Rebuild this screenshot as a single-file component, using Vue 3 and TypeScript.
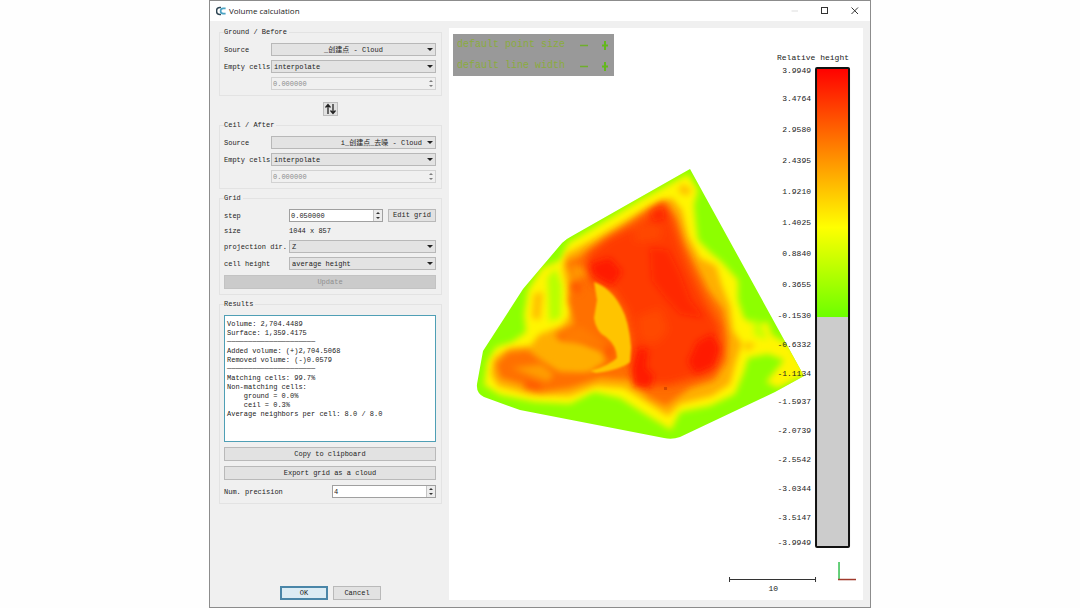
<script setup lang="ts">
import { reactive, ref } from 'vue'

interface CloudGroup {
  id: string
  title: string
  source: string
  align: string
  empty: string
  value: string
}

const before = reactive<CloudGroup>({
  id: 'before', title: 'Ground / Before', source: '_创建点 - Cloud', align: 'center', empty: 'interpolate', value: '0.000000',
})
const after = reactive<CloudGroup>({
  id: 'after', title: 'Ceil / After', source: 'i_创建点_去噪 - Cloud', align: 'right', empty: 'interpolate', value: '0.000000',
})
const groups = [before, after]

function swapClouds() {
  const source = before.source
  before.source = after.source
  after.source = source
}

const step = ref('0.050000')
const precision = ref('4')
const rule = '─────────────────────'
const report = ref(`Volume: 2,704.4489
Surface: 1,359.4175
${rule}
Added volume: (+)2,704.5068
Removed volume: (-)0.0579
${rule}
Matching cells: 99.7%
Non-matching cells:
    ground = 0.0%
    ceil = 0.3%
Average neighbors per cell: 8.0 / 8.0`)

const ticks = [
  { y: 70, label: '3.9949' }, { y: 98, label: '3.4764' }, { y: 129, label: '2.9580' },
  { y: 160, label: '2.4395' }, { y: 191, label: '1.9210' }, { y: 222, label: '1.4025' },
  { y: 253, label: '0.8840' }, { y: 284, label: '0.3655' }, { y: 315, label: '-0.1530' },
  { y: 344, label: '-0.6332' }, { y: 373, label: '-1.1134' }, { y: 401, label: '-1.5937' },
  { y: 430, label: '-2.0739' }, { y: 459, label: '-2.5542' }, { y: 488, label: '-3.0344' },
  { y: 517, label: '-3.5147' }, { y: 542, label: '-3.9949' },
]
const displayOptions = ['default point size', 'default line width']
</script>

<template>
  <main class="window">
    <header class="titlebar">
      <svg class="logo" viewBox="0 0 10 10" aria-hidden="true">
        <path d="M5 1.6H3.800A3.200 3.400 0 0 0 3.800 8.400H5" fill="none" stroke="#2f4654" stroke-width="1.500" />
        <path d="M9.600 2.300H7.200Q4.600 2.600 4.600 5T7.200 7.700H9.600" fill="none" stroke="#4ba3c4" stroke-width="1.700" />
      </svg>
      <h1>Volume calculation</h1>
      <div class="controls">
        <button type="button" aria-label="Minimize" disabled>
          <svg viewBox="0 0 10 10"><path d="M1.500 5H8" stroke="#ddd" /></svg>
        </button>
        <button type="button" aria-label="Maximize">
          <svg viewBox="0 0 10 10"><rect x="1.500" y="1.500" width="6" height="6" fill="none" stroke="#333" /></svg>
        </button>
        <button type="button" aria-label="Close">
          <svg viewBox="0 0 10 10"><path d="M1.500 1.500 8 8M8 1.500 1.500 8" stroke="#333" /></svg>
        </button>
      </div>
    </header>

    <div class="body">
      <form class="panel" @submit.prevent>
        <template v-for="g in groups" :key="g.id">
          <fieldset class="group">
            <legend>{{ g.title }}</legend>
            <div class="row">
              <label :for="g.id + '-source'">Source</label>
              <span class="combo">
                <select :id="g.id + '-source'" :class="g.align"><option>{{ g.source }}</option></select>
              </span>
            </div>
            <div class="row">
              <label :for="g.id + '-empty'">Empty cells</label>
              <span class="combo">
                <select :id="g.id + '-empty'" v-model="g.empty"><option>interpolate</option></select>
              </span>
            </div>
            <div class="row">
              <span></span>
              <span class="spin off">
                <input v-model="g.value" type="text" :aria-label="g.title + ' empty cell value'" disabled />
                <i class="arrows"></i>
              </span>
            </div>
          </fieldset>
          <button v-if="g.id === 'before'" class="swap" type="button" aria-label="Swap clouds" @click="swapClouds">
            <svg viewBox="0 0 13 12">
              <path d="M4 11V2M1.500 4.500 4 1.500 6.500 4.500M9 1V10M6.500 7.500 9 10.500 11.500 7.500" fill="none" stroke="#222" stroke-width="1.300" />
            </svg>
          </button>
        </template>

        <fieldset class="group grid">
          <legend>Grid</legend>
          <div class="row">
            <label for="step">step</label>
            <span class="pair">
              <span class="spin"><input id="step" v-model="step" type="text" /><i class="arrows"></i></span>
              <button class="btn edit" type="button">Edit grid</button>
            </span>
          </div>
          <div class="row size"><span>size</span><output>1044 x 857</output></div>
          <div class="row">
            <label for="dir">projection dir.</label>
            <span class="combo"><select id="dir"><option>Z</option></select></span>
          </div>
          <div class="row">
            <label for="height">cell height</label>
            <span class="combo"><select id="height"><option>average height</option></select></span>
          </div>
          <button class="btn" type="button" disabled>Update</button>
        </fieldset>

        <fieldset class="group results">
          <legend>Results</legend>
          <textarea v-model="report" aria-label="Results" readonly spellcheck="false"></textarea>
          <button class="btn" type="button">Copy to clipboard</button>
          <button class="btn" type="button">Export grid as a cloud</button>
          <div class="row precision">
            <label for="precision">Num. precision</label>
            <span class="spin"><input id="precision" v-model="precision" type="text" /><i class="arrows"></i></span>
          </div>
        </fieldset>

        <footer class="actions">
          <button class="btn ok" type="submit">OK</button>
          <button class="btn" type="button">Cancel</button>
        </footer>
      </form>

      <section class="viewer" aria-label="Relative height view">
        <svg class="scene" viewBox="449 28 414 570" preserveAspectRatio="xMidYMin meet">
          <defs>
            <linearGradient id="ramp" x1="0" y1="0" x2="0" y2="1">
              <stop offset="0" stop-color="#ff0000" />
              <stop offset=".64" stop-color="#ffff00" />
              <stop offset="1" stop-color="#6cff00" />
            </linearGradient>
            <clipPath id="outline">
              <path d="M690 169 804 376 775 392 680 437Q672 440 664 438L520 410 484 397Q476 393 477 384L483 351 523 289 562 243Q566 239 572 236Z" />
            </clipPath>
            <filter id="b1" x="-20%" y="-20%" width="140%" height="140%"><feGaussianBlur stdDeviation="1" /></filter>
            <filter id="b3" x="-30%" y="-30%" width="160%" height="160%"><feGaussianBlur stdDeviation="3" /></filter>
            <filter id="b5" x="-30%" y="-30%" width="160%" height="160%"><feGaussianBlur stdDeviation="5" /></filter>
          </defs>
          <g clip-path="url(#outline)">
            <rect x="470" y="160" width="340" height="285" fill="#8dff00" />
            <g filter="url(#b3)">
              <path fill="#fff500" d="M688 174 640 200 600 224 568 243 560 260 542 268 528 290 524 315 526 332 512 342 496 347 487 362 484 385 500 395 535 402 570 404 594 392 620 398 645 414 671 430 680 412 710 406 735 394 744 372 748 358 768 354 784 360 766 382 778 388 808 374 790 345 772 335 768 322 754 324 744 318 738 300 738 280 722 262 710 252 698 240 696 225 694 205 698 190Z" />
              <path fill="#b8ff00" d="M547 277 556 268 562 285 561 318 549 322Z" />
              <path fill="#c8ff00" d="M752 318 762 324 768 340 754 336Z" />
            </g>
            <g filter="url(#b3)">
              <path fill="#ffae00" d="M672 198 650 206 600 236 566 254 563 268 567 288 572 312 562 326 540 334 530 346 510 348 494 358 491 374 498 386 532 395 570 396 596 386 624 388 648 403 668 416 680 404 712 396 730 384 736 362 742 344 733 330 730 306 722 286 716 266 700 258 688 236 682 210Z" />
              <path fill="#ffb000" opacity=".8" d="M682 184 692 190 686 196 678 191ZM704 266 716 268 719 294 708 288ZM534 294 543 292 540 320 532 318ZM744 342 756 344 746 352Z" />
            </g>
            <g filter="url(#b3)">
              <path fill="#ff7000" d="M664 200 648 210 610 237 580 256 566 262 574 278 568 300 574 324 555 334 560 344 582 346 605 358 590 372 560 372 543 362 528 350 508 352 496 364 500 378 524 385 540 392 570 388 600 378 630 380 650 398 666 406 690 388 714 380 726 362 728 340 723 310 708 290 696 266 684 244 676 218Z" />
            </g>
            <g filter="url(#b3)">
              <path fill="#ffae00" d="M538 340 575 344 600 352 605 362 580 369 556 364Z" />
              <path fill="#ff9c00" d="M512 368 542 364 554 374 548 382 532 376Z" />
              <path fill="#ff9800" d="M572 264 590 270 588 276 572 280Z" />
              <path fill="#ff5a00" d="M572 280 582 284 580 294 571 290ZM606 344 614 348 612 360 604 356ZM526 380 542 384 538 390 524 388Z" />
              <path fill="#ff8800" d="M560 334 580 326 594 336 606 348 590 344 566 342Z" opacity=".5" />
            </g>
            <g filter="url(#b5)">
              <path fill="#ff3b00" d="M664 204 650 214 632 226 608 238 588 254 586 270 594 284 612 290 626 312 632 340 630 366 640 384 668 386 690 380 712 374 722 356 720 326 704 298 690 268 680 242 672 218Z" />
              <path fill="#ff5a00" opacity=".5" d="M636 318 660 308 668 330 656 344 640 340ZM636 226 660 224 662 238 634 242Z" />
            </g>
            <g filter="url(#b3)" fill="#ff1200" opacity=".85">
              <path d="M590 264 610 258 622 272 612 286 594 276Z" />
              <path d="M697 342 712 334 720 348 714 366 696 374 688 362Z" />
              <path d="M638 348 648 350 646 368 654 376 650 388 634 386 632 370Z" />
              <path d="M650 248 668 250 680 274 690 300 704 318 680 314 664 296 652 280Z" opacity=".55" />
              <path d="M650 212 662 206 666 218 654 222Z" opacity=".6" />
            </g>
            <path fill="#ffc400" filter="url(#b1)" d="M594 282Q611 288 621 307 629 321 631 347L630 362Q620 370 596 373L590 371Q610 365 617 358 617 346 606 337 596 332 594 318L597 300Z" />
            <path fill="#c43a00" opacity=".7" d="M664 387h3v3h-3z" />
          </g>

          <rect x="816" y="68" width="33" height="479" fill="#ccc" />
          <rect x="816" y="68" width="33" height="249" fill="url(#ramp)" />
          <rect x="816" y="68" width="33" height="479" fill="none" stroke="#111" stroke-width="2" rx="1" />
          <text class="tick" x="849" y="60">Relative height</text>
          <text v-for="t in ticks" :key="t.label" class="tick" x="811" :y="t.y + 3">{{ t.label }}</text>

          <path d="M729 579.500H816M729.500 577V582M815.500 577V582" stroke="#333" fill="none" />
          <text class="tick" x="778" y="591">10</text>
          <path d="M839 562V579" stroke="#35c04f" stroke-width="1.500" />
          <path d="M838 579.500H856" stroke="#a03a2c" stroke-width="1.500" />
        </svg>

        <div class="overlay">
          <div v-for="o in displayOptions" :key="o" class="option">
            <span>{{ o }}</span>
            <button type="button" :aria-label="'Decrease ' + o">
              <svg viewBox="0 0 10 10"><path d="M1 5.500H9" stroke="#6fae2c" stroke-width="1.500" /></svg>
            </button>
            <button type="button" :aria-label="'Increase ' + o">
              <svg viewBox="0 0 10 10"><path d="M2 5.500H8M5 1V10" stroke="#63b81c" stroke-width="2" /></svg>
            </button>
          </div>
        </div>
      </section>
    </div>
  </main>
</template>

<style>
body {
  background: #fefefe;
}
</style>

<style scoped>
* {
  box-sizing: border-box;
}
.window {
  display: flex;
  flex-direction: column;
  width: 61.3%;
  min-height: 100vh;
  margin: 0 auto;
  background: #f0f0f0;
  border: 1px solid #8c8c8c;
  font: 7px/10px "Liberation Mono", "Noto Sans CJK SC", monospace;
  color: #222;
}
button,
input,
select,
textarea {
  margin: 0;
  padding: 0;
  border-radius: 0;
  font: inherit;
  color: inherit;
}
.titlebar {
  display: flex;
  align-items: center;
  height: 20px;
  padding-left: 6px;
  background: #fff;
}
.logo {
  width: 10px;
  height: 10px;
  margin-right: 3px;
}
h1 {
  margin: 0;
  font: 8px/12px "Open Sans", "Noto Sans", sans-serif;
}
.controls {
  display: flex;
  margin-left: auto;
}
.controls button {
  display: grid;
  place-items: center;
  width: 30px;
  height: 18px;
  background: none;
  border: 0;
}
.controls svg {
  width: 10px;
  height: 10px;
}
.body {
  display: flex;
  flex: 1;
  padding: 6px 7px 7px 9px;
}
.panel {
  display: flex;
  flex-direction: column;
  width: 223px;
  margin-right: 7px;
}
.group {
  display: flex;
  flex-direction: column;
  gap: 4px;
  min-width: 0;
  margin: 0 0 4px;
  padding: 6px 5px 5px 4px;
  border: 1px solid #e3e3e3;
}
legend {
  padding: 0 2px 0 0;
  line-height: 10px;
}
.row {
  display: grid;
  grid-template-columns: 47px 1fr;
  align-items: center;
  height: 13px;
  white-space: nowrap;
}
.grid .row {
  grid-template-columns: 65px 1fr;
}
.grid .size {
  height: 10px;
}
.row.precision {
  grid-template-columns: 108px 1fr;
}
.combo {
  position: relative;
  display: flex;
  height: 13px;
}
.combo::after {
  content: "";
  position: absolute;
  top: 5px;
  right: 3px;
  border: 3px solid transparent;
  border-top-color: #222;
  border-bottom: 0;
  pointer-events: none;
}
select {
  appearance: none;
  width: 100%;
  height: 13px;
  padding: 0 13px 0 2px;
  background: #e3e3e3;
  border: 1px solid #b8b8b8;
}
select.center {
  padding-left: 13px;
  text-align: center;
  text-align-last: center;
}
select.right {
  text-align: right;
  text-align-last: right;
}
.spin {
  display: flex;
  flex: 1;
  height: 13px;
  background: #fff;
  border: 1px solid #a0a0a0;
}
.spin input {
  flex: 1;
  width: 0;
  min-width: 0;
  padding-left: 1px;
  background: none;
  border: 0;
}
.arrows {
  display: flex;
  flex-direction: column;
  align-items: center;
  justify-content: center;
  gap: 3px;
  width: 9px;
  background: #ececec;
  border-left: 1px solid #c4c4c4;
}
.arrows::before,
.arrows::after {
  content: "";
  border: 2px solid transparent;
}
.arrows::before {
  border-top: 0;
  border-bottom-color: #333;
}
.arrows::after {
  border-bottom: 0;
  border-top-color: #333;
}
.spin.off {
  background: #f0f0f0;
  border-color: #d2d2d2;
  color: #8c8c8c;
}
.off .arrows {
  background: none;
  border-color: transparent;
  opacity: 0.6;
}
.swap {
  align-self: center;
  width: 15px;
  height: 14px;
  margin: 2px 0 4px;
  background: #e1e1e1;
  border: 1px solid #bdbdbd;
}
.swap svg {
  display: block;
  width: 13px;
  height: 12px;
}
.pair {
  display: flex;
  gap: 5px;
}
.btn {
  height: 14px;
  background: #e2e2e2;
  border: 1px solid #b9b9b9;
  line-height: 11px;
}
.btn:disabled {
  margin-top: 1px;
  background: #cbcbcb;
  border-color: #c3c3c3;
  color: #8f8f8f;
}
.edit {
  width: 48px;
  height: 13px;
}
.results {
  gap: 5px;
}
textarea {
  width: 100%;
  height: 127px;
  padding: 4px 2px;
  background: #fff;
  border: 1px solid #4f9fb5;
  outline: 0;
  resize: none;
  overflow: hidden;
  line-height: 9px;
  white-space: pre;
}
.actions {
  display: flex;
  justify-content: center;
  gap: 5px;
  margin-top: auto;
}
.actions .btn {
  width: 48px;
}
.actions .ok {
  background: #dcecf4;
  border: 2px solid #4a86a8;
  line-height: 9px;
}
.viewer {
  position: relative;
  flex: 1;
  margin-top: 1px;
  background: #fff;
}
.scene {
  display: block;
  width: 100%;
}
.tick {
  font-size: 8px;
  text-anchor: end;
  fill: #222;
}
.overlay {
  position: absolute;
  top: 6px;
  left: 4px;
  padding: 0 4px;
  background: #999;
  color: #8bac3c;
  font-size: 10px;
}
.option {
  display: flex;
  align-items: center;
  height: 21px;
  white-space: nowrap;
}
.option span {
  margin-right: 14px;
}
.option button {
  width: 10px;
  height: 10px;
  margin-right: 11px;
  background: none;
  border: 0;
}
.option button:last-child {
  margin-right: 0;
}
.option svg {
  display: block;
  width: 10px;
  height: 10px;
}
</style>
